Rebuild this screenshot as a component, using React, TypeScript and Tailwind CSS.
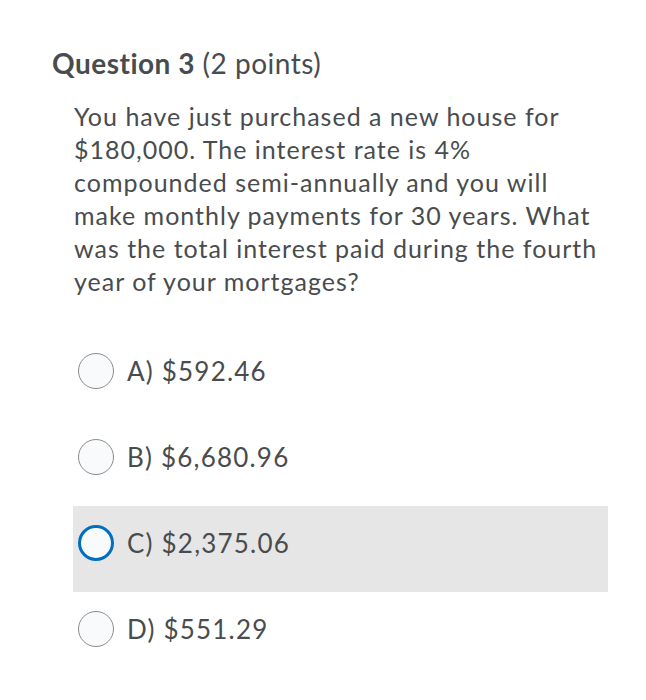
const options = [
  { label: 'A) $592.46', selected: false },
  { label: 'B) $6,680.96', selected: false },
  { label: 'C) $2,375.06', selected: true },
  { label: 'D) $551.29', selected: false },
]

export default function App() {
  return (
    <div
      className="min-h-[700px] w-[646px] bg-white text-[#494c4e]"
      style={{ fontFamily: 'Lato, "Open Sans", sans-serif' }}
    >
      <div className="pl-[52px] pt-[46px]">
        <h2 className="whitespace-nowrap text-[28px] leading-[34px] tracking-[0.5px]">
          <span className="font-bold">Question 3</span> (2 points)
        </h2>
      </div>

      <p className="mt-[20px] whitespace-nowrap pl-[74px] text-[25px] leading-[33px] tracking-[1px]">
        You have just purchased a new house for
        <br />
        $180,000. The interest rate is 4%
        <br />
        compounded semi-annually and you will
        <br />
        make monthly payments for 30 years. What
        <br />
        was the total interest paid during the fourth
        <br />
        year of your mortgages?
      </p>

      <div className="ml-[73px] mt-[36px] w-[535px]">
        {options.map((o) => (
          <div
            key={o.label}
            className={
              'flex h-[86px] items-start pl-[5px] pt-[19px] ' +
              (o.selected ? 'bg-[#e6e6e6]' : '')
            }
          >
            <div className="flex h-[36px] items-center gap-[13px]">
              <span
                className={
                  'block h-[36px] w-[36px] rounded-full bg-[#f9fafc] ' +
                  (o.selected
                    ? 'border-[3px] border-[#006fbf]'
                    : 'border-[1.5px] border-[#898b8d]')
                }
              />
              <span className="whitespace-nowrap text-[26px] leading-[36px] tracking-[1.2px]">
                {o.label}
              </span>
            </div>
          </div>
        ))}
      </div>
    </div>
  )
}
